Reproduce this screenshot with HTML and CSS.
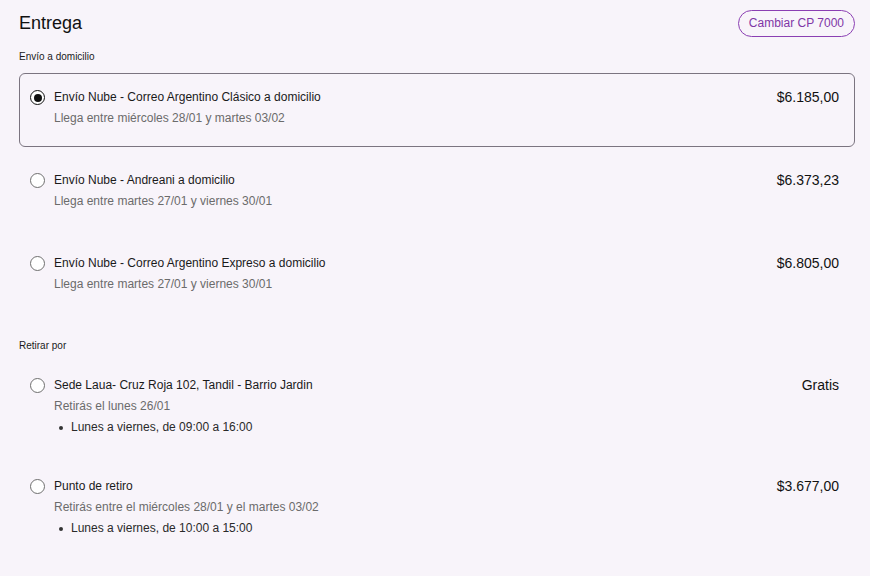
FILE: index.html
```html
<!DOCTYPE html>
<html lang="es">
<head>
<meta charset="utf-8">
<title>Entrega</title>
<link rel="stylesheet" href="styles.css">
</head>
<body>
<main class="page">
  <header class="header">
    <h1 class="title">Entrega</h1>
    <button class="cp-btn">Cambiar CP 7000</button>
  </header>

  <section class="section">
    <div class="section-label">Envío a domicilio</div>
    <div class="options">
      <label class="option selected">
        <span class="radio checked"></span>
        <span class="info">
          <span class="opt-title">Envío Nube - Correo Argentino Clásico a domicilio</span>
          <span class="opt-sub">Llega entre miércoles 28/01 y martes 03/02</span>
        </span>
        <span class="price">$6.185,00</span>
      </label>
      <label class="option">
        <span class="radio"></span>
        <span class="info">
          <span class="opt-title">Envío Nube - Andreani a domicilio</span>
          <span class="opt-sub">Llega entre martes 27/01 y viernes 30/01</span>
        </span>
        <span class="price">$6.373,23</span>
      </label>
      <label class="option">
        <span class="radio"></span>
        <span class="info">
          <span class="opt-title">Envío Nube - Correo Argentino Expreso a domicilio</span>
          <span class="opt-sub">Llega entre martes 27/01 y viernes 30/01</span>
        </span>
        <span class="price">$6.805,00</span>
      </label>
    </div>
  </section>

  <section class="section second">
    <div class="section-label">Retirar por</div>
    <div class="options">
      <label class="option pickup">
        <span class="radio"></span>
        <span class="info">
          <span class="opt-title">Sede Laua- Cruz Roja 102, Tandil - Barrio Jardin</span>
          <span class="opt-sub">Retirás el lunes 26/01</span>
          <ul class="hours"><li>Lunes a viernes, de 09:00 a 16:00</li></ul>
        </span>
        <span class="price">Gratis</span>
      </label>
      <label class="option pickup">
        <span class="radio"></span>
        <span class="info">
          <span class="opt-title">Punto de retiro</span>
          <span class="opt-sub">Retirás entre el miércoles 28/01 y el martes 03/02</span>
          <ul class="hours"><li>Lunes a viernes, de 10:00 a 15:00</li></ul>
        </span>
        <span class="price">$3.677,00</span>
      </label>
    </div>
  </section>
</main>
</body>
</html>
```

FILE: styles.css
```css
html, body {
  margin: 0;
  padding: 0;
  background: #f8f4fa;
}

body {
  font-family: "Liberation Sans", Arial, Helvetica, sans-serif;
  color: #1a1a1a;
}

.page {
  padding: 10px 15px 0 19px;
}

.header {
  display: flex;
  justify-content: space-between;
  align-items: center;
  height: 27px;
}

.title {
  margin: 0;
  font-size: 18px;
  font-weight: 400;
  line-height: 27px;
  color: #111;
}

.cp-btn {
  height: 27px;
  padding: 0 10px;
  border: 1px solid #8b3fb3;
  border-radius: 14px;
  background: transparent;
  color: #7f36a6;
  font-family: inherit;
  font-size: 12px;
  line-height: 25px;
}

.section {
  margin-top: 13px;
}

.section.second {
  margin-top: 26px;
}

.section-label {
  font-size: 10px;
  line-height: 14px;
  color: #1a1a1a;
  margin-bottom: 9px;
}

.second .section-label {
  margin-bottom: 8px;
}

.options {
  display: flex;
  flex-direction: column;
  gap: 9px;
}

.option {
  display: flex;
  align-items: flex-start;
  padding: 13px 15px 17px 10px;
  border: 1px solid transparent;
  border-radius: 6px;
}

.option.pickup {
  padding-bottom: 14px;
}

.option.selected {
  border-color: #7b7480;
}

.radio {
  flex: none;
  box-sizing: border-box;
  width: 15px;
  height: 15px;
  margin-top: 3px;
  margin-right: 9px;
  border: 1px solid #6f6f6f;
  border-radius: 50%;
  background: #fff;
  position: relative;
}

.radio.checked {
  border: 1.5px solid #111;
}

.radio.checked::after {
  content: "";
  position: absolute;
  left: 50%;
  top: 50%;
  width: 8px;
  height: 8px;
  margin: -4px 0 0 -4px;
  border-radius: 50%;
  background: #111;
}

.info {
  flex: 1;
  display: flex;
  flex-direction: column;
}

.opt-title {
  font-size: 12px;
  line-height: 21px;
  color: #1a1a1a;
}

.opt-sub {
  font-size: 12px;
  line-height: 21px;
  color: #6b6b6b;
}

.hours {
  list-style: none;
  margin: 0;
  padding: 0;
}

.hours li {
  position: relative;
  padding-left: 17px;
  font-size: 12px;
  line-height: 21px;
  color: #2a2a2a;
}

.hours li::before {
  content: "";
  position: absolute;
  left: 5px;
  top: 9px;
  width: 4px;
  height: 4px;
  border-radius: 50%;
  background: #333;
}

.price {
  flex: none;
  font-size: 14px;
  line-height: 21px;
  color: #111;
}
```
